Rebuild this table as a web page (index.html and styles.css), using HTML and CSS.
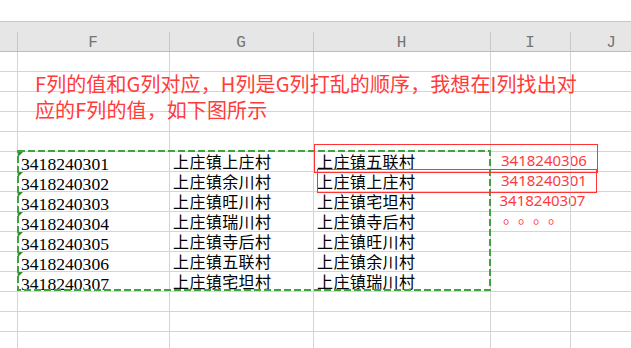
FILE: index.html
```html
<!DOCTYPE html>
<html lang="zh-CN">
<head>
<meta charset="utf-8">
<title>Sheet</title>
<link rel="stylesheet" href="styles.css">
</head>
<body>
<div class="sheet">
  <div class="hdr">
    <div class="hc gut"></div>
    <div class="hc">F</div>
    <div class="hc">G</div>
    <div class="hc">H</div>
    <div class="hc">I</div>
    <div class="hc">J</div>
  </div>
  <div class="row"><div class="c gut"></div><div class="c"></div><div class="c"></div><div class="c"></div><div class="c"></div><div class="c"></div></div>
  <div class="row"><div class="c gut"></div><div class="c"></div><div class="c"></div><div class="c"></div><div class="c"></div><div class="c"></div></div>
  <div class="row"><div class="c gut"></div><div class="c"></div><div class="c"></div><div class="c"></div><div class="c"></div><div class="c"></div></div>
  <div class="row"><div class="c gut"></div><div class="c"></div><div class="c"></div><div class="c"></div><div class="c"></div><div class="c"></div></div>
  <div class="row"><div class="c gut"></div><div class="c"></div><div class="c"></div><div class="c"></div><div class="c"></div><div class="c"></div></div>
  <div class="row"><div class="c gut"></div><div class="c num txt">3418240301</div><div class="c cn">上庄镇上庄村</div><div class="c cn">上庄镇五联村</div><div class="c red">3418240306</div><div class="c"></div></div>
  <div class="row"><div class="c gut"></div><div class="c num txt">3418240302</div><div class="c cn">上庄镇余川村</div><div class="c cn">上庄镇上庄村</div><div class="c red">3418240301</div><div class="c"></div></div>
  <div class="row"><div class="c gut"></div><div class="c num txt">3418240303</div><div class="c cn">上庄镇旺川村</div><div class="c cn">上庄镇宅坦村</div><div class="c red red3">3418240307</div><div class="c"></div></div>
  <div class="row"><div class="c gut"></div><div class="c num txt">3418240304</div><div class="c cn">上庄镇瑞川村</div><div class="c cn">上庄镇寺后村</div><div class="c dots">。。。。</div><div class="c"></div></div>
  <div class="row"><div class="c gut"></div><div class="c num txt">3418240305</div><div class="c cn">上庄镇寺后村</div><div class="c cn">上庄镇旺川村</div><div class="c"></div><div class="c"></div></div>
  <div class="row"><div class="c gut"></div><div class="c num txt">3418240306</div><div class="c cn">上庄镇五联村</div><div class="c cn">上庄镇余川村</div><div class="c"></div><div class="c"></div></div>
  <div class="row"><div class="c gut"></div><div class="c num txt">3418240307</div><div class="c cn">上庄镇宅坦村</div><div class="c cn">上庄镇瑞川村</div><div class="c"></div><div class="c"></div></div>
  <div class="row"><div class="c gut"></div><div class="c"></div><div class="c"></div><div class="c"></div><div class="c"></div><div class="c"></div></div>
  <div class="row"><div class="c gut"></div><div class="c"></div><div class="c"></div><div class="c"></div><div class="c"></div><div class="c"></div></div>
  <div class="row"><div class="c gut"></div><div class="c"></div><div class="c"></div><div class="c"></div><div class="c"></div><div class="c"></div></div>

  <div class="note">F列的值和G列对应，H列是G列打乱的顺序，我想在I列找出对<br>应的F列的值，如下图所示</div>

  <svg class="marks" width="631" height="348" viewBox="0 0 631 348" aria-hidden="true">
    <rect x="18" y="151" width="472" height="139" fill="none" stroke="#3fa33f" stroke-width="2" stroke-dasharray="7 3"/>
    <rect x="314.5" y="144.5" width="283" height="28" fill="none" stroke="#ff3333" stroke-width="1"/>
    <rect x="317.5" y="169.5" width="279" height="23" fill="none" stroke="#ff3333" stroke-width="1"/>
  </svg>
</div>
</body>
</html>
```

FILE: styles.css
```css
html, body {
  margin: 0;
  padding: 0;
  background: #ffffff;
}
body {
  width: 631px;
  height: 348px;
  overflow: hidden;
  text-spacing-trim: space-all;
}
.sheet {
  position: relative;
  width: 631px;
  height: 348px;
  padding-top: 21px;
  box-sizing: border-box;
  overflow: hidden;
}
.hdr {
  display: grid;
  grid-template-columns: 17px 152px 144px 177px 80px 82px;
  height: 31px;
  box-sizing: border-box;
  border-top: 1px solid #c6c6c6;
  border-bottom: 1px solid #bdbdbd;
  background: #e6e6e6;
}
.hc {
  font-family: "Liberation Mono", "DejaVu Sans Mono", monospace;
  font-size: 16px;
  line-height: 16px;
  padding-top: 13px;
  color: #747474;
  text-align: center;
  background: linear-gradient(#c9c9c9, #c9c9c9) left bottom / 1px 19px no-repeat;
}
.hc.gut {
  background: none;
}
.row {
  display: grid;
  grid-template-columns: 17px 152px 144px 177px 80px 82px;
  height: 20px;
  box-sizing: border-box;
  border-bottom: 1px solid #d4d4d4;
}
.c {
  position: relative;
  height: 19px;
  box-sizing: border-box;
  border-left: 1px solid #d4d4d4;
  white-space: nowrap;
  color: #000000;
}
.c.gut {
  border-left: none;
}
.num {
  font-family: "Liberation Serif", serif;
  font-size: 17.6px;
  line-height: 19px;
  padding: 2.5px 0 0 3px;
}
.txt::before {
  content: "";
  position: absolute;
  left: 0;
  top: 0;
  width: 0;
  height: 0;
  border-top: 5px solid #2e8b2e;
  border-right: 5px solid transparent;
}
.cn {
  font-family: "Noto Sans CJK SC", sans-serif;
  font-size: 16px;
  line-height: 19px;
  letter-spacing: 0.4px;
  padding-left: 3px;
}
.red {
  font-family: "Noto Sans", "Liberation Sans", sans-serif;
  font-size: 15px;
  line-height: 16px;
  color: #ff3b3b;
  padding-left: 10px;
}
.red3 {
  line-height: 17.5px;
  padding-left: 8.5px;
}
.dots {
  font-family: "Noto Sans CJK SC", sans-serif;
  font-size: 16px;
  line-height: 9px;
  letter-spacing: -1px;
  color: #ff3b3b;
  padding-left: 12px;
  text-spacing-trim: space-all;
}
.note {
  position: absolute;
  left: 35px;
  top: 71px;
  font-family: "Noto Sans CJK SC", sans-serif;
  font-size: 20px;
  line-height: 26px;
  letter-spacing: 0.1px;
  color: #ff3b3b;
  white-space: nowrap;
}
.marks {
  position: absolute;
  left: 0;
  top: 0;
  pointer-events: none;
}
```
